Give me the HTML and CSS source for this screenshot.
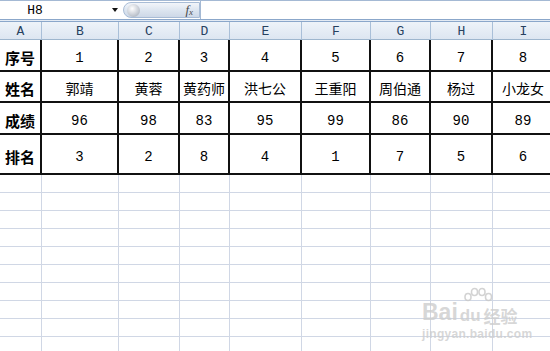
FILE: index.html
```html
<!DOCTYPE html>
<html>
<head>
<meta charset="utf-8">
<link rel="stylesheet" href="styles.css">
</head>
<body>
<div class="app">
  <div class="toolbar">
    <div class="namebox"><span class="ref">H8</span><span class="drop"></span></div>
    <div class="fxpill"><span class="ball"></span><span class="fx">f<sub>x</sub></span></div>
    <div class="input"></div>
  </div>
  <div class="band"></div>
  <div class="sheet">
    <div class="grid">
      <div class="hd">A</div><div class="hd">B</div><div class="hd">C</div><div class="hd">D</div><div class="hd">E</div><div class="hd">F</div><div class="hd">G</div><div class="hd">H</div><div class="hd">I</div>

      <div class="c lab r1">序号</div><div class="c num r1">1</div><div class="c num r1">2</div><div class="c num r1">3</div><div class="c num r1">4</div><div class="c num r1">5</div><div class="c num r1">6</div><div class="c num r1">7</div><div class="c num r1">8</div>

      <div class="c lab r2">姓名</div><div class="c zh r2">郭靖</div><div class="c zh r2">黄蓉</div><div class="c zh r2">黄药师</div><div class="c zh r2">洪七公</div><div class="c zh r2">王重阳</div><div class="c zh r2">周伯通</div><div class="c zh r2">杨过</div><div class="c zh r2">小龙女</div>

      <div class="c lab r3">成绩</div><div class="c num r3">96</div><div class="c num r3">98</div><div class="c num r3">83</div><div class="c num r3">95</div><div class="c num r3">99</div><div class="c num r3">86</div><div class="c num r3">90</div><div class="c num r3">89</div>

      <div class="c lab r4">排名</div><div class="c num r4">3</div><div class="c num r4">2</div><div class="c num r4">8</div><div class="c num r4">4</div><div class="c num r4">1</div><div class="c num r4">7</div><div class="c num r4">5</div><div class="c num r4">6</div>

      <div class="e"></div><div class="e"></div><div class="e"></div><div class="e"></div><div class="e"></div><div class="e"></div><div class="e"></div><div class="e"></div><div class="e"></div>
      <div class="e"></div><div class="e"></div><div class="e"></div><div class="e"></div><div class="e"></div><div class="e"></div><div class="e"></div><div class="e"></div><div class="e"></div>
      <div class="e"></div><div class="e"></div><div class="e"></div><div class="e"></div><div class="e"></div><div class="e"></div><div class="e"></div><div class="e"></div><div class="e"></div>
      <div class="e"></div><div class="e"></div><div class="e"></div><div class="e"></div><div class="e"></div><div class="e"></div><div class="e"></div><div class="e"></div><div class="e"></div>
      <div class="e"></div><div class="e"></div><div class="e"></div><div class="e"></div><div class="e"></div><div class="e"></div><div class="e"></div><div class="e"></div><div class="e"></div>
      <div class="e"></div><div class="e"></div><div class="e"></div><div class="e"></div><div class="e"></div><div class="e"></div><div class="e"></div><div class="e"></div><div class="e"></div>
      <div class="e"></div><div class="e"></div><div class="e"></div><div class="e"></div><div class="e"></div><div class="e"></div><div class="e"></div><div class="e"></div><div class="e"></div>
      <div class="e"></div><div class="e"></div><div class="e"></div><div class="e"></div><div class="e"></div><div class="e"></div><div class="e"></div><div class="e"></div><div class="e"></div>
      <div class="e"></div><div class="e"></div><div class="e"></div><div class="e"></div><div class="e"></div><div class="e"></div><div class="e"></div><div class="e"></div><div class="e"></div>
      <div class="e"></div><div class="e"></div><div class="e"></div><div class="e"></div><div class="e"></div><div class="e"></div><div class="e"></div><div class="e"></div><div class="e"></div>
    </div>
    <div class="wm">
      <svg class="paw" width="32" height="16" viewBox="0 0 32 16">
        <g fill="none" stroke="rgba(200,200,200,0.8)" stroke-width="1.6">
          <ellipse cx="6" cy="10" rx="3" ry="3.5"/>
          <ellipse cx="12.5" cy="5" rx="3" ry="3.5"/>
          <ellipse cx="20" cy="5" rx="3" ry="3.5"/>
          <ellipse cx="26.5" cy="10" rx="3" ry="3.5"/>
        </g>
      </svg>
      <div class="wm-top"><span class="wm-bai">Bai</span><span class="wm-du">du</span><span class="wm-jy">经验</span></div>
      <div class="wm-url">jingyan.baidu.com</div>
    </div>
  </div>
</div>
</body>
</html>
```
FILE: styles.css
```css
html, body {
  margin: 0;
  padding: 0;
  background: #fff;
}
.app {
  width: 550px;
  height: 351px;
  overflow: hidden;
  font-family: "Liberation Mono", monospace;
}
.toolbar {
  height: 18px;
  border-top: 1px solid #a4b9d4;
  display: flex;
  background: #fff;
}
.namebox {
  width: 123px;
  display: flex;
  align-items: center;
}
.ref {
  width: 70px;
  text-align: center;
  font-size: 13px;
  color: #000;
  font-family: "Liberation Mono", monospace;
}
.drop {
  margin-left: 42px;
  width: 0;
  height: 0;
  border-left: 3px solid transparent;
  border-right: 3px solid transparent;
  border-top: 4px solid #111;
}
.fxpill {
  width: 77px;
  height: 16px;
  margin-top: 1px;
  border: 1px solid #a8bcd6;
  border-radius: 9px 0 0 9px;
  background: linear-gradient(#f2f5fa, #dbe4ef 55%, #cdd8e7);
  display: flex;
  align-items: center;
  justify-content: space-between;
  padding: 0 6px 0 3px;
  box-sizing: border-box;
}
.ball {
  width: 13px;
  height: 13px;
  border-radius: 50%;
  background: radial-gradient(circle at 40% 35%, #ffffff, #c9ced6 55%, #9aa3ae);
}
.fx {
  font-family: "Liberation Serif", serif;
  font-style: italic;
  font-size: 13px;
  color: #4a4a4a;
  line-height: 1;
}
.fx sub {
  font-size: 9px;
  vertical-align: -1px;
}
.input {
  flex: 1;
  border-left: 1px solid #a4b9d4;
}
.band {
  height: 1px;
  border-top: 1px solid #8ba7ca;
  border-bottom: 1px solid #8ba7ca;
  background: #e4ebf4;
}
.sheet {
  position: relative;
}
.grid {
  display: grid;
  grid-template-columns: 42px 77px 61px 50px 72px 69px 60px 62px 62px;
  grid-template-rows: 18px 32px 31px 32px 40px repeat(10, 18px);
}
.grid > div {
  box-sizing: border-box;
}
.hd {
  background: linear-gradient(#eef3f9, #dde6f1);
  border-right: 1px solid #a9bfd8;
  border-bottom: 1px solid #9eb6ce;
  font-family: "Liberation Mono", monospace;
  font-size: 13px;
  color: #27415f;
  display: flex;
  align-items: center;
  justify-content: center;
  padding-top: 1px;
}
.c {
  border-right: 2px solid #111;
  border-bottom: 2px solid #111;
  display: flex;
  align-items: center;
  justify-content: center;
  color: #000;
  padding-top: 4px;
}
.lab {
  font-family: "Noto Sans CJK SC", sans-serif;
  font-weight: 700;
  font-size: 15px;
}
.zh {
  font-family: "Noto Sans CJK SC", sans-serif;
  font-size: 14px;
  font-weight: 400;
  padding-top: 3px;
}
.num {
  font-family: "Liberation Mono", monospace;
  font-size: 14px;
  padding-top: 6px;
}
.e {
  border-right: 1px solid #d0d7e5;
  border-bottom: 1px solid #d0d7e5;
}
.wm {
  position: absolute;
  left: 422px;
  top: 265px;
  color: rgba(205, 205, 205, 0.8);
  font-family: "Liberation Sans", sans-serif;
  font-weight: 700;
  line-height: 1;
}
.paw {
  display: block;
  margin-left: 40px;
  margin-bottom: -3px;
}
.wm-top {
  display: flex;
  align-items: flex-end;
  font-size: 23px;
  line-height: 1.1;
}
.wm-du {
  font-size: 17px;
  margin-left: 2px;
}
.wm-jy {
  font-family: "Noto Sans CJK SC", sans-serif;
  font-size: 17px;
  margin-left: 3px;
}
.wm-url {
  font-size: 12px;
  margin-top: 3px;
  letter-spacing: 0.3px;
}
```
